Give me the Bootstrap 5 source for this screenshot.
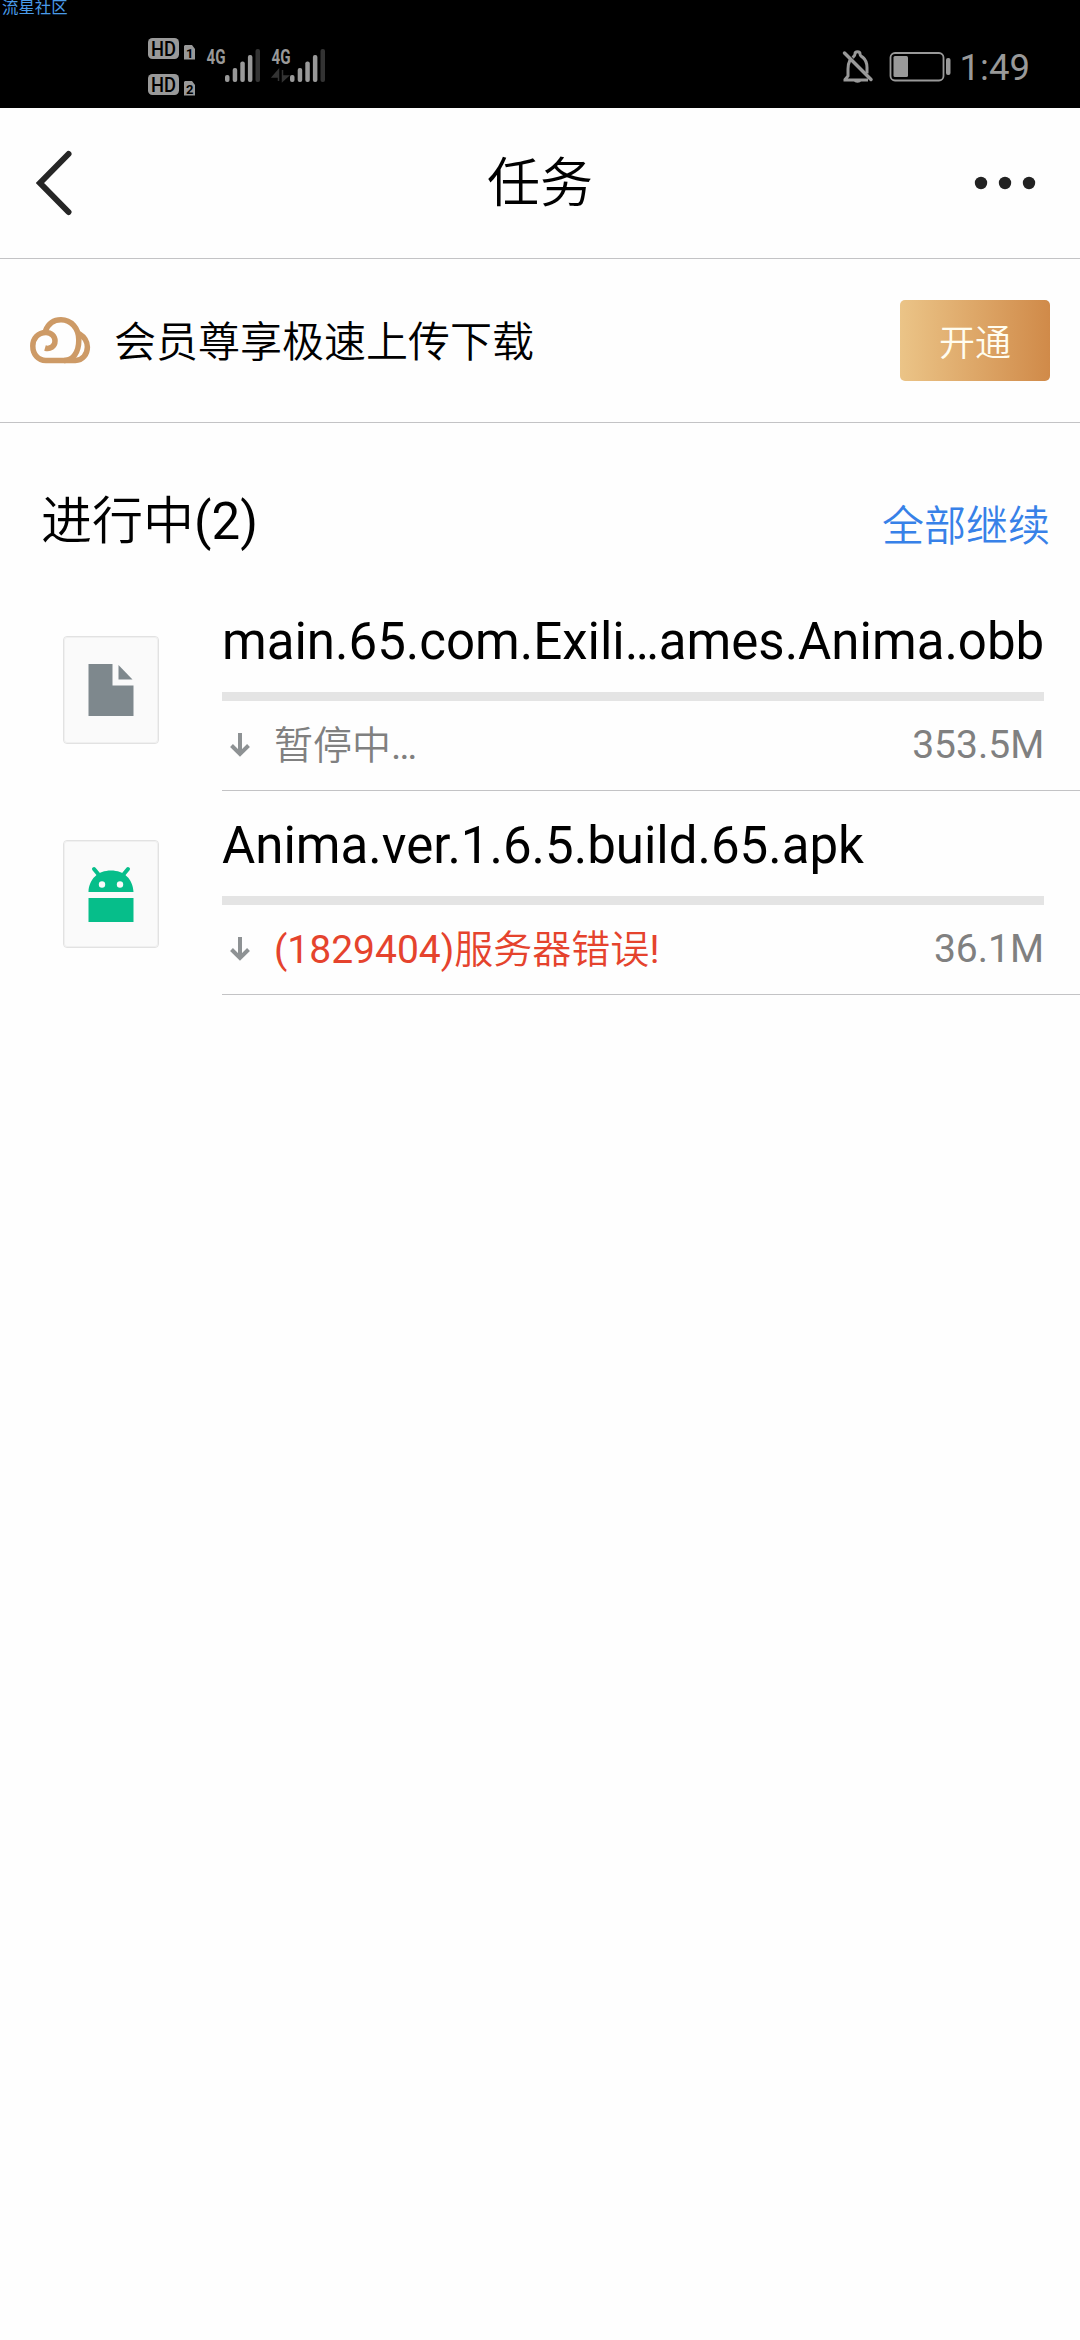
<!DOCTYPE html>
<html lang="zh-CN">
<head>
  <meta charset="UTF-8" />
  <meta name="viewport" content="width=device-width, initial-scale=1" />
  <title>任务</title>
  <link href="https://cdn.jsdelivr.net/npm/bootstrap@5.3.2/dist/css/bootstrap.min.css" rel="stylesheet">
  <style>
    body {
      background: #fefefe;
      color: #000;
      font-family: Roboto, "Noto Sans CJK SC", sans-serif;
      overflow-x: hidden;
    }
    svg { display: block; flex: none; }
    .zh { font-family: "Noto Sans CJK SC", sans-serif; font-weight: 350; }

    /* status bar */
    .status-bar {
      height: 108px;
      background: #000;
      color: #999;
      padding: 26px 50px 0 148px;
    }
    .watermark {
      top: -1px;
      left: 2px;
      font-size: 16.4px;
      line-height: 18px;
      color: #4a9be8;
    }
    .clock { font-size: 36.5px; line-height: 83px; margin-left: 8px; }

    /* title bar */
    .title-bar {
      height: 151px;
      padding: 0 44px 0 36px;
      border-bottom: 1px solid #c3c3c5;
    }
    .title-bar h1 { font-size: 53px; line-height: 75px; margin: 0 0 8px 30px; }

    /* vip banner */
    .vip-bar {
      height: 164px;
      padding: 0 30px;
      border-bottom: 1px solid #c3c3c5;
    }
    .vip-text { font-size: 42px; line-height: 60px; margin: 0 0 3px 23px; }
    .btn-vip {
      width: 150px;
      height: 81px;
      padding: 0;
      border: 0;
      border-radius: 5px;
      font-size: 36px;
      line-height: 81px;
      color: #fffdf0;
      background: linear-gradient(90deg, #ebc487, #d08a49);
    }

    /* task list */
    .section-head { height: 164px; padding: 0 30px 0 41px; }
    .section-title { font-size: 51px; font-weight: 400; line-height: 74px; margin-top: 57px; }
    .resume-all { font-size: 42px; line-height: 60px; margin-top: 70px; color: #3781e8; }
    .task { height: 204px; padding-left: 63px; }
    .file-tile {
      width: 96px;
      height: 108px;
      margin: 49px 63px 0 0;
      border: 1px solid #e2e2e2;
      outline: 1px solid #f0f0f0;
      outline-offset: -2px;
      border-radius: 4px;
      background: #fafafa;
    }
    .task-body { padding: 25px 36px 0 0; border-bottom: 1px solid #c3c3c5; }
    .task-name { font-size: 51px; line-height: 60px; white-space: nowrap; }
    .task .progress {
      height: 9px;
      margin-top: 20px;
      border-radius: 0;
      background: #e4e4e4;
    }
    .task-meta {
      height: 50px;
      margin-top: 19px;
      padding-left: 8px;
      font-size: 39px;
      line-height: 50px;
      color: #808080;
    }
    .task-state { margin: 0 0 3px 24px; }
    .task-error { color: #e5432d; }
  </style>
</head>
<body>
  <!-- Status bar -->
  <header class="status-bar position-relative d-flex justify-content-between">
    <span class="watermark position-absolute">流星社区</span>
    <svg width="180" height="82" viewBox="148 26 180 82" fill="#999">
      <rect x="148" y="38" width="31" height="21" rx="4.5" />
      <rect x="148" y="74" width="31" height="21" rx="4.5" />
      <path d="M185 45h7l3 4v10.500h-11v-13.500zM185 81h7l3 4v10.500h-11v-13.500z" />
      <g fill="#000" font-family="Roboto" font-weight="500">
        <text x="151" y="55.500" font-size="20" textLength="25" lengthAdjust="spacingAndGlyphs">HD</text>
        <text x="151" y="91.500" font-size="20" textLength="25" lengthAdjust="spacingAndGlyphs">HD</text>
        <text x="186" y="57.500" font-size="13" font-weight="700">1</text>
        <text x="186" y="93.500" font-size="13" font-weight="700">2</text>
      </g>
      <g font-family="Roboto" font-weight="700" font-size="20">
        <text x="206.500" y="63.500" textLength="19" lengthAdjust="spacingAndGlyphs">4G</text>
        <text x="271.500" y="63.500" textLength="19" lengthAdjust="spacingAndGlyphs">4G</text>
      </g>
      <g id="bars">
        <rect x="225" y="75" width="4.500" height="7" rx="2" />
        <rect x="232.700" y="68" width="4.500" height="14" rx="2" />
        <rect x="240.300" y="61.500" width="4.500" height="20.500" rx="2" />
        <rect x="247.900" y="55" width="4.500" height="27" rx="2" />
        <rect x="255.500" y="49" width="4.500" height="33" rx="2" fill="#333" />
      </g>
      <use href="#bars" x="65" />
      <path d="M278.500 81V70l-6 7h6zM282.500 70v11l5.500-5h-5.500z" fill="#333" stroke="#333" stroke-width="1.500" />
    </svg>
    <div class="d-flex">
      <svg width="110" height="82" viewBox="841 26 110 82" fill="none" stroke="#999">
        <path d="M849 60c-1.500 3-2 5-2 9v7l-3 3.500v.5h23" stroke-width="3" />
        <path d="M851.500 57.500c1.500-1.200 2.500-1.500 2.500-3.500 0-3 5-3 5 0 0 2 1 2 3 3.500 3.500 3 4 6 4 10v6" stroke-width="3" />
        <path d="M843.500 53l26.500 26.500" stroke-width="3.500" stroke-linecap="round" />
        <path d="M853 80.500h7c0 3-7 3-7 0z" fill="#999" stroke="none" />
        <rect x="889.500" y="53" width="53" height="27.500" rx="4.500" stroke-width="1.800" />
        <rect x="892.500" y="56" width="14.500" height="21" rx="1.500" fill="#999" stroke="none" />
        <rect x="945" y="58" width="4.500" height="17" rx="2" fill="#999" stroke="none" />
      </svg>
      <span class="clock">1:49</span>
    </div>
  </header>

  <!-- Title bar -->
  <nav class="title-bar d-flex align-items-center justify-content-between">
    <svg width="40" height="66" viewBox="0 0 40 66" fill="none" stroke="#262626" stroke-width="6">
      <path d="M32.500 4L4 33l28.500 29" stroke-linecap="round" />
    </svg>
    <h1 class="zh">任务</h1>
    <svg width="62" height="14" viewBox="0 0 62 14" fill="#222">
      <circle cx="7" cy="7" r="6.200" />
      <circle cx="31" cy="7" r="6.200" />
      <circle cx="55" cy="7" r="6.200" />
    </svg>
  </nav>

  <!-- VIP banner -->
  <section class="vip-bar d-flex align-items-center">
    <svg width="61" height="47" viewBox="0 0 61 47" fill="none" stroke="#cd9a66" stroke-width="5.500">
      <path d="M15 31c5 1.500 10-1.500 10-7 0-5-4-8.500-9-8.500C8 15.500 2.800 21.500 2.800 29c0 8.500 5.500 14.500 13 14.500h19c8 0 14-8 14-20.500C48.800 11 41 2.800 31 2.800c-7 0-12.500 3.500-15.500 11" />
      <path d="M49 16.500c5.500 3.500 8.400 8 8.400 13.500 0 7.500-5 13.500-12 13.500H34" />
    </svg>
    <span class="vip-text zh">会员尊享极速上传下载</span>
    <button class="btn btn-vip zh ms-auto">开通</button>
  </section>

  <main>
    <div class="section-head d-flex justify-content-between align-items-start">
      <div class="section-title"><span class="zh">进行中</span>(2)</div>
      <a class="resume-all zh text-decoration-none" href="#">全部继续</a>
    </div>

    <!-- Obb file, paused -->
    <div class="task d-flex">
      <div class="file-tile flex-shrink-0 d-flex align-items-center justify-content-center">
        <svg width="46" height="52" viewBox="0 0 46 52" fill="#7e888d">
          <path d="M.5 0h24v21.500h21V52H.5z" />
          <path d="M30.500 1l14 14.500h-14z" />
        </svg>
      </div>
      <div class="task-body flex-grow-1">
        <div class="task-name">main.65.com.Exili…ames.Anima.obb</div>
        <div class="progress"></div>
        <div class="task-meta d-flex align-items-center">
          <svg width="20" height="24" viewBox="0 0 20 24" fill="none" stroke="#8e9294" stroke-width="4">
            <path d="M10 0v21M1.500 12.500L10 21l8.500-8.500" />
          </svg>
          <span class="task-state"><span class="zh">暂停中</span>…</span>
          <span class="ms-auto">353.5M</span>
        </div>
      </div>
    </div>

    <!-- Apk file, failed -->
    <div class="task d-flex">
      <div class="file-tile flex-shrink-0 d-flex align-items-center justify-content-center">
        <svg width="46" height="56" viewBox="0 0 46 56" fill="#06be8a">
          <path d="M.5 26C1 13 10 4.500 23 4.500S45 13 45.500 26zM.5 32h45v24H.5z" />
          <path d="M6 3l5 6M40 3l-5 6" stroke="#06be8a" stroke-width="4" stroke-linecap="round" />
          <circle cx="14" cy="18.500" r="3.200" fill="#fafafa" />
          <circle cx="32" cy="18.500" r="3.200" fill="#fafafa" />
        </svg>
      </div>
      <div class="task-body flex-grow-1">
        <div class="task-name">Anima.ver.1.6.5.build.65.apk</div>
        <div class="progress"></div>
        <div class="task-meta d-flex align-items-center">
          <svg width="20" height="24" viewBox="0 0 20 24" fill="none" stroke="#8e9294" stroke-width="4">
            <path d="M10 0v21M1.500 12.500L10 21l8.500-8.500" />
          </svg>
          <span class="task-state task-error">(1829404)<span class="zh">服务器错误</span>!</span>
          <span class="ms-auto">36.1M</span>
        </div>
      </div>
    </div>
  </main>

  <script src="https://cdn.jsdelivr.net/npm/bootstrap@5.3.2/dist/js/bootstrap.bundle.min.js"></script>
</body>
</html>
